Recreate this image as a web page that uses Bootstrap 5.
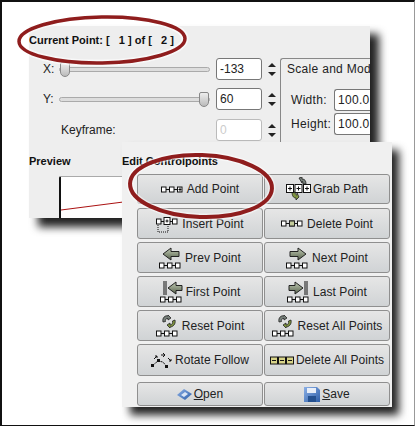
<!DOCTYPE html>
<html lang="en"><head><meta charset="utf-8"><title>Edit Controlpoints</title>
<link href="https://cdn.jsdelivr.net/npm/bootstrap@5.3.0/dist/css/bootstrap.min.css" rel="stylesheet">
<style>
html,body{margin:0;height:426px;overflow:hidden;background:#fff}
body{font-family:"Liberation Sans",Arial,sans-serif;font-size:12px;color:#222}
.canvas{position:relative;width:415px;height:426px;overflow:hidden;background:#fff;border:solid #111;border-width:2px 1px 1px 2px;border-right-color:#999}
.win{position:absolute;background:#eeeeee;overflow:hidden}
.shade{position:absolute;background:#222;filter:blur(4px)}
.back-shade{left:36px;top:32px;width:341px;height:193px}
.front-shade{left:128px;top:148px;width:269px;height:265px}
.back{left:27px;top:24px;width:341px;height:192px;padding:7px 0 0 0}
.front{left:120px;top:140px;width:270px;height:265px;background:#f0f0f0;padding:12px 0 0 0}
.heading{font-weight:700;font-size:11px;line-height:14px;white-space:pre;color:#111}
.row-line{height:22px;width:350px}
.r1{margin-top:11px}.r2{margin-top:8px}.r3{margin-top:9px}
.lbl{width:30px;padding-left:14px;flex:none}
.track{position:relative;width:151px;height:5px;flex:none;border:1px solid #aaa;border-radius:3px;background:#ddd;margin-right:6px}
.thumb{position:absolute;top:-6px;width:10px;height:15px;background:linear-gradient(#eee,#bbb);border:1px solid #888;border-radius:2px 2px 5px 5px}
.field{width:46px;height:22px;flex:none;background:#fff;border:1px solid #777;border-radius:3px;padding:2px 3px;line-height:16px;font-size:12px;overflow:hidden}
.field.off{color:#ccc;border-color:#bbb}
.group .field{letter-spacing:.3px;width:40px;border-right:0;border-radius:3px 0 0 3px}
.spin{width:19px;flex:none;display:flex;flex-direction:column;align-items:center;gap:5px}
.up{width:0;height:0;border:solid transparent;border-width:0 4px 4px;border-bottom-color:#222}
.dn{width:0;height:0;border:solid transparent;border-width:4px 4px 0;border-top-color:#222}
.group{position:absolute;left:251px;top:32px;width:90px;height:120px;border:1px solid #888;border-right:0;border-radius:3px 0 0 3px;padding:2px 0 0 6px;letter-spacing:.3px}
.group-row{height:24px}
.group-row span{width:47px;padding-left:4px;flex:none}
.preview{position:absolute;left:30px;top:150px;width:200px;height:60px;background:#fff;border:1px solid #aaa;border-left:2px solid #111;border-radius:2px}
.grid-btns{display:grid;grid-template-columns:126px 126px;column-gap:1px;padding-left:15px;margin-top:6px}
.pbtn{display:flex;align-items:center;justify-content:center;gap:2px;color:#222;line-height:14px;background:linear-gradient(#e6e6e6,#d0d3d5);border:1px solid #8f8f8f;border-radius:3px;padding:0;font-size:12px;white-space:nowrap;overflow:hidden;letter-spacing:.05px}
.pbtn svg{flex:none;display:block}
.h30{height:30px;margin-bottom:4px}.h31{height:31px;margin-bottom:3px}.h32{height:32px;margin-bottom:6px}.h24{height:24px}
.marks{position:absolute;left:-2px;top:-2px;pointer-events:none}
.n{fill:#fff;stroke:#111;stroke-width:1}
.l{stroke:#111;stroke-width:1;fill:none}
</style></head><body>
<svg width="0" height="0" class="position-absolute"><defs>
<symbol id="chain" viewBox="0 0 24 7"><path class="l" d="M5 3.500h3M13 3.500h3"/><rect class="n" x=".5" y="1" width="4.500" height="5"/><rect class="n" x="8.500" y="1" width="4.500" height="5"/><rect class="n" x="16.500" y="1" width="4.500" height="5"/></symbol>
<symbol id="swirl" viewBox="0 0 14 13"><path d="M1 7C0 3 3 0 6 1V0l3 3-3 2V3.500C4 3 3 5 3.500 6.500z" fill="#77807a" stroke="#222" stroke-width=".8"/><path d="M13 5c1 4-2 7-5 7v1L5 10l3-2v2c2 0 3-2 2.500-4z" fill="#7f9440" stroke="#222" stroke-width=".8"/></symbol>
<linearGradient id="ga" x1="0" y1="0" x2="0" y2="1"><stop offset="0" stop-color="#c3cdb6"/><stop offset="1" stop-color="#55604b"/></linearGradient>
<linearGradient id="bl" x1="0" y1="0" x2="1" y2="1"><stop offset="0" stop-color="#8cb0e6"/><stop offset="1" stop-color="#2c5da8"/></linearGradient>
</defs></svg>
<div class="canvas">
 <div class="shade back-shade"></div>
 <div class="win back">
  <div class="heading">Current Point: [   1 ] of [   2 ]</div>
  <div class="d-flex align-items-center row-line r1"><div class="lbl">X:</div><div class="track"><div class="thumb" style="left:0"></div></div><div class="field">-133</div><div class="spin"><i class="up"></i><i class="dn"></i></div></div>
  <div class="d-flex align-items-center row-line r2"><div class="lbl">Y:</div><div class="track"><div class="thumb" style="left:139px"></div></div><div class="field">60</div><div class="spin"><i class="up"></i><i class="dn"></i></div></div>
  <div class="d-flex align-items-center row-line r3"><div style="width:187px;padding-left:32px;flex:none">Keyframe:</div><div class="field off">0</div><div class="spin"><i class="up"></i><i class="dn"></i></div></div>
  <div class="heading" style="margin-top:13px">Preview</div>
  <div class="group"><div style="height:24px;line-height:16px;white-space:nowrap">Scale and Mod</div>
   <div class="d-flex align-items-center group-row" style="margin-top:3px"><span>Width:</span><div class="field">100.0</div></div>
   <div class="d-flex align-items-center group-row"><span>Height:</span><div class="field">100.0</div></div>
  </div>
  <div class="preview"><svg width="200" height="60" class="d-block"><path d="M0 33L70 24" stroke="#a11" fill="none"/></svg></div>
 </div>
 <div class="shade front-shade"></div>
 <div class="win front">
  <div class="heading">Edit Controlpoints</div>
  <div class="grid-btns">
   <button class="btn pbtn h30" type="button"><svg width="24" height="7"><use href="#chain"/><path class="l" d="M17.500 3.500h3M19 1.500v4"/></svg>Add Point</button>
   <button class="btn pbtn h30" type="button"><svg width="25" height="24" viewBox="0 0 25 24"><path d="M13 1l3-1v2c3 0 4 2 4 5h-3c0-2-1-3-1-3v2z" fill="#77807a" stroke="#222" stroke-width=".8"/><path d="M6 15h3c0 2 1 3 2 3v-2l2 4-3 3v-2c-3 0-4-3-4-6z" fill="#7f9440" stroke="#222" stroke-width=".8"/><g><rect class="n" x=".5" y="7.500" width="7" height="8"/><rect class="n" x="9" y="7.500" width="7" height="8"/><rect class="n" x="17.500" y="7.500" width="7" height="8"/><path class="l" d="M2 11.500h4M4 9.500v4M10.500 11.500h4M12.500 9.500v4M19 11.500h4M21 9.500v4"/></g></svg>Grab Path</button>
   <button class="btn pbtn h31" type="button"><svg width="24" height="18" viewBox="0 0 24 18"><use href="#chain" width="24" height="7" y="3"/><path class="l" d="M2 10v7h10v-6" stroke-dasharray="1 1"/><rect x="8" y="2.500" width="6" height="7" fill="#fff" stroke="#111"/><path class="l" d="M9.500 6h3M11 4.500v3"/></svg>Insert Point</button>
   <button class="btn pbtn h31" type="button"><svg width="24" height="7"><use href="#chain"/><rect x="8.500" y="1" width="5" height="5" fill="#c3cb9a" stroke="#222"/></svg>Delete Point</button>
   <button class="btn pbtn h31" type="button"><svg width="24" height="24" viewBox="0 0 24 24"><path d="M4 8l8-6v3.500h8v5h-8V14z" fill="url(#ga)" stroke="#222"/><use href="#chain" y="16" width="24" height="7"/></svg>Prev Point</button>
   <button class="btn pbtn h31" type="button"><svg width="24" height="24" viewBox="0 0 24 24"><path d="M20 8l-8-6v3.500H4v5h8V14z" fill="url(#ga)" stroke="#222"/><use href="#chain" y="16" width="24" height="7"/></svg>Next Point</button>
   <button class="btn pbtn h31" type="button"><svg width="24" height="24" viewBox="0 0 24 24"><path class="l" d="M4 1v14M6 1v14"/><path d="M8 8l8-6v3.500h6v5h-6V14z" fill="url(#ga)" stroke="#222"/><use href="#chain" y="16" width="24" height="7"/></svg>First Point</button>
   <button class="btn pbtn h31" type="button"><svg width="24" height="24" viewBox="0 0 24 24"><path class="l" d="M20 1v14M18 1v14"/><path d="M16 8l-8-6v3.500H2v5h6V14z" fill="url(#ga)" stroke="#222"/><use href="#chain" y="16" width="24" height="7"/></svg>Last Point</button>
   <button class="btn pbtn h31" type="button"><svg width="24" height="24" viewBox="0 0 24 24"><use href="#swirl" x="6" y="1" width="14" height="13"/><use href="#chain" y="16" width="24" height="7"/></svg>Reset Point</button>
   <button class="btn pbtn h31" type="button"><svg width="24" height="24" viewBox="0 0 24 24"><use href="#swirl" x="6" y="1" width="14" height="13"/><use href="#chain" y="16" width="24" height="7"/></svg>Reset All Points</button>
   <button class="btn pbtn h32" type="button"><svg width="22" height="16" viewBox="0 0 22 16"><path class="l" d="M2 13L7 9l5 1 4 5" stroke-dasharray="2 1"/><rect x="0" y="12" width="3" height="3" fill="#111"/><rect x="6" y="7" width="3" height="3" fill="#111"/><rect x="14" y="13" width="3" height="3" fill="#111"/><path class="l" d="M3 7l3-3M4 4h2v2M10 3h4M12 1l2 2-2 2M17 6l3 3M20 7v2h-2"/></svg>Rotate Follow</button>
   <button class="btn pbtn h32" type="button"><svg width="24" height="9" viewBox="0 0 24 9"><g fill="#d8d488" stroke="#111"><rect x=".5" y="1" width="7" height="7"/><rect x="8.500" y="1" width="7" height="7"/><rect x="16.500" y="1" width="7" height="7"/></g><path class="l" d="M2 4.500h4M10 4.500h4M18 4.500h4"/></svg>Delete All Points</button>
   <button class="btn pbtn h24" type="button"><svg width="15" height="13" viewBox="0 0 15 13"><path d="M0 7L7 1l8 5-7 6z" fill="url(#bl)"/><path d="M4 7l4-3 3 2-4 3z" fill="#dbe6f6"/></svg><span><u>O</u>pen</span></button>
   <button class="btn pbtn h24" type="button"><svg width="16" height="15" viewBox="0 0 16 15"><path d="M0 0h13l3 3v12H0z" fill="url(#bl)"/><rect x="3" y="1" width="9" height="5" fill="#e8eef8"/><rect x="4" y="9" width="8" height="6" fill="#24508f"/></svg><span><u>S</u>ave</span></button>
  </div>
 </div>
 <svg class="marks" width="415" height="426" viewBox="0 0 415 426">
  <g fill="none">
   <ellipse cx="102" cy="40" rx="83" ry="23" transform="rotate(-1 102 40)" stroke="#fff" stroke-width="7" opacity=".6"/>
   <ellipse cx="102" cy="40" rx="83" ry="23" transform="rotate(-1 102 40)" stroke="#8f1d1d" stroke-width="3.500"/>
   <ellipse cx="201" cy="186" rx="71" ry="31" transform="rotate(2 201 186)" stroke="#fff" stroke-width="7" opacity=".5"/>
   <ellipse cx="201" cy="186" rx="71" ry="31" transform="rotate(2 201 186)" stroke="#8f1d1d" stroke-width="4"/>
  </g>
 </svg>
</div>
</body></html>
